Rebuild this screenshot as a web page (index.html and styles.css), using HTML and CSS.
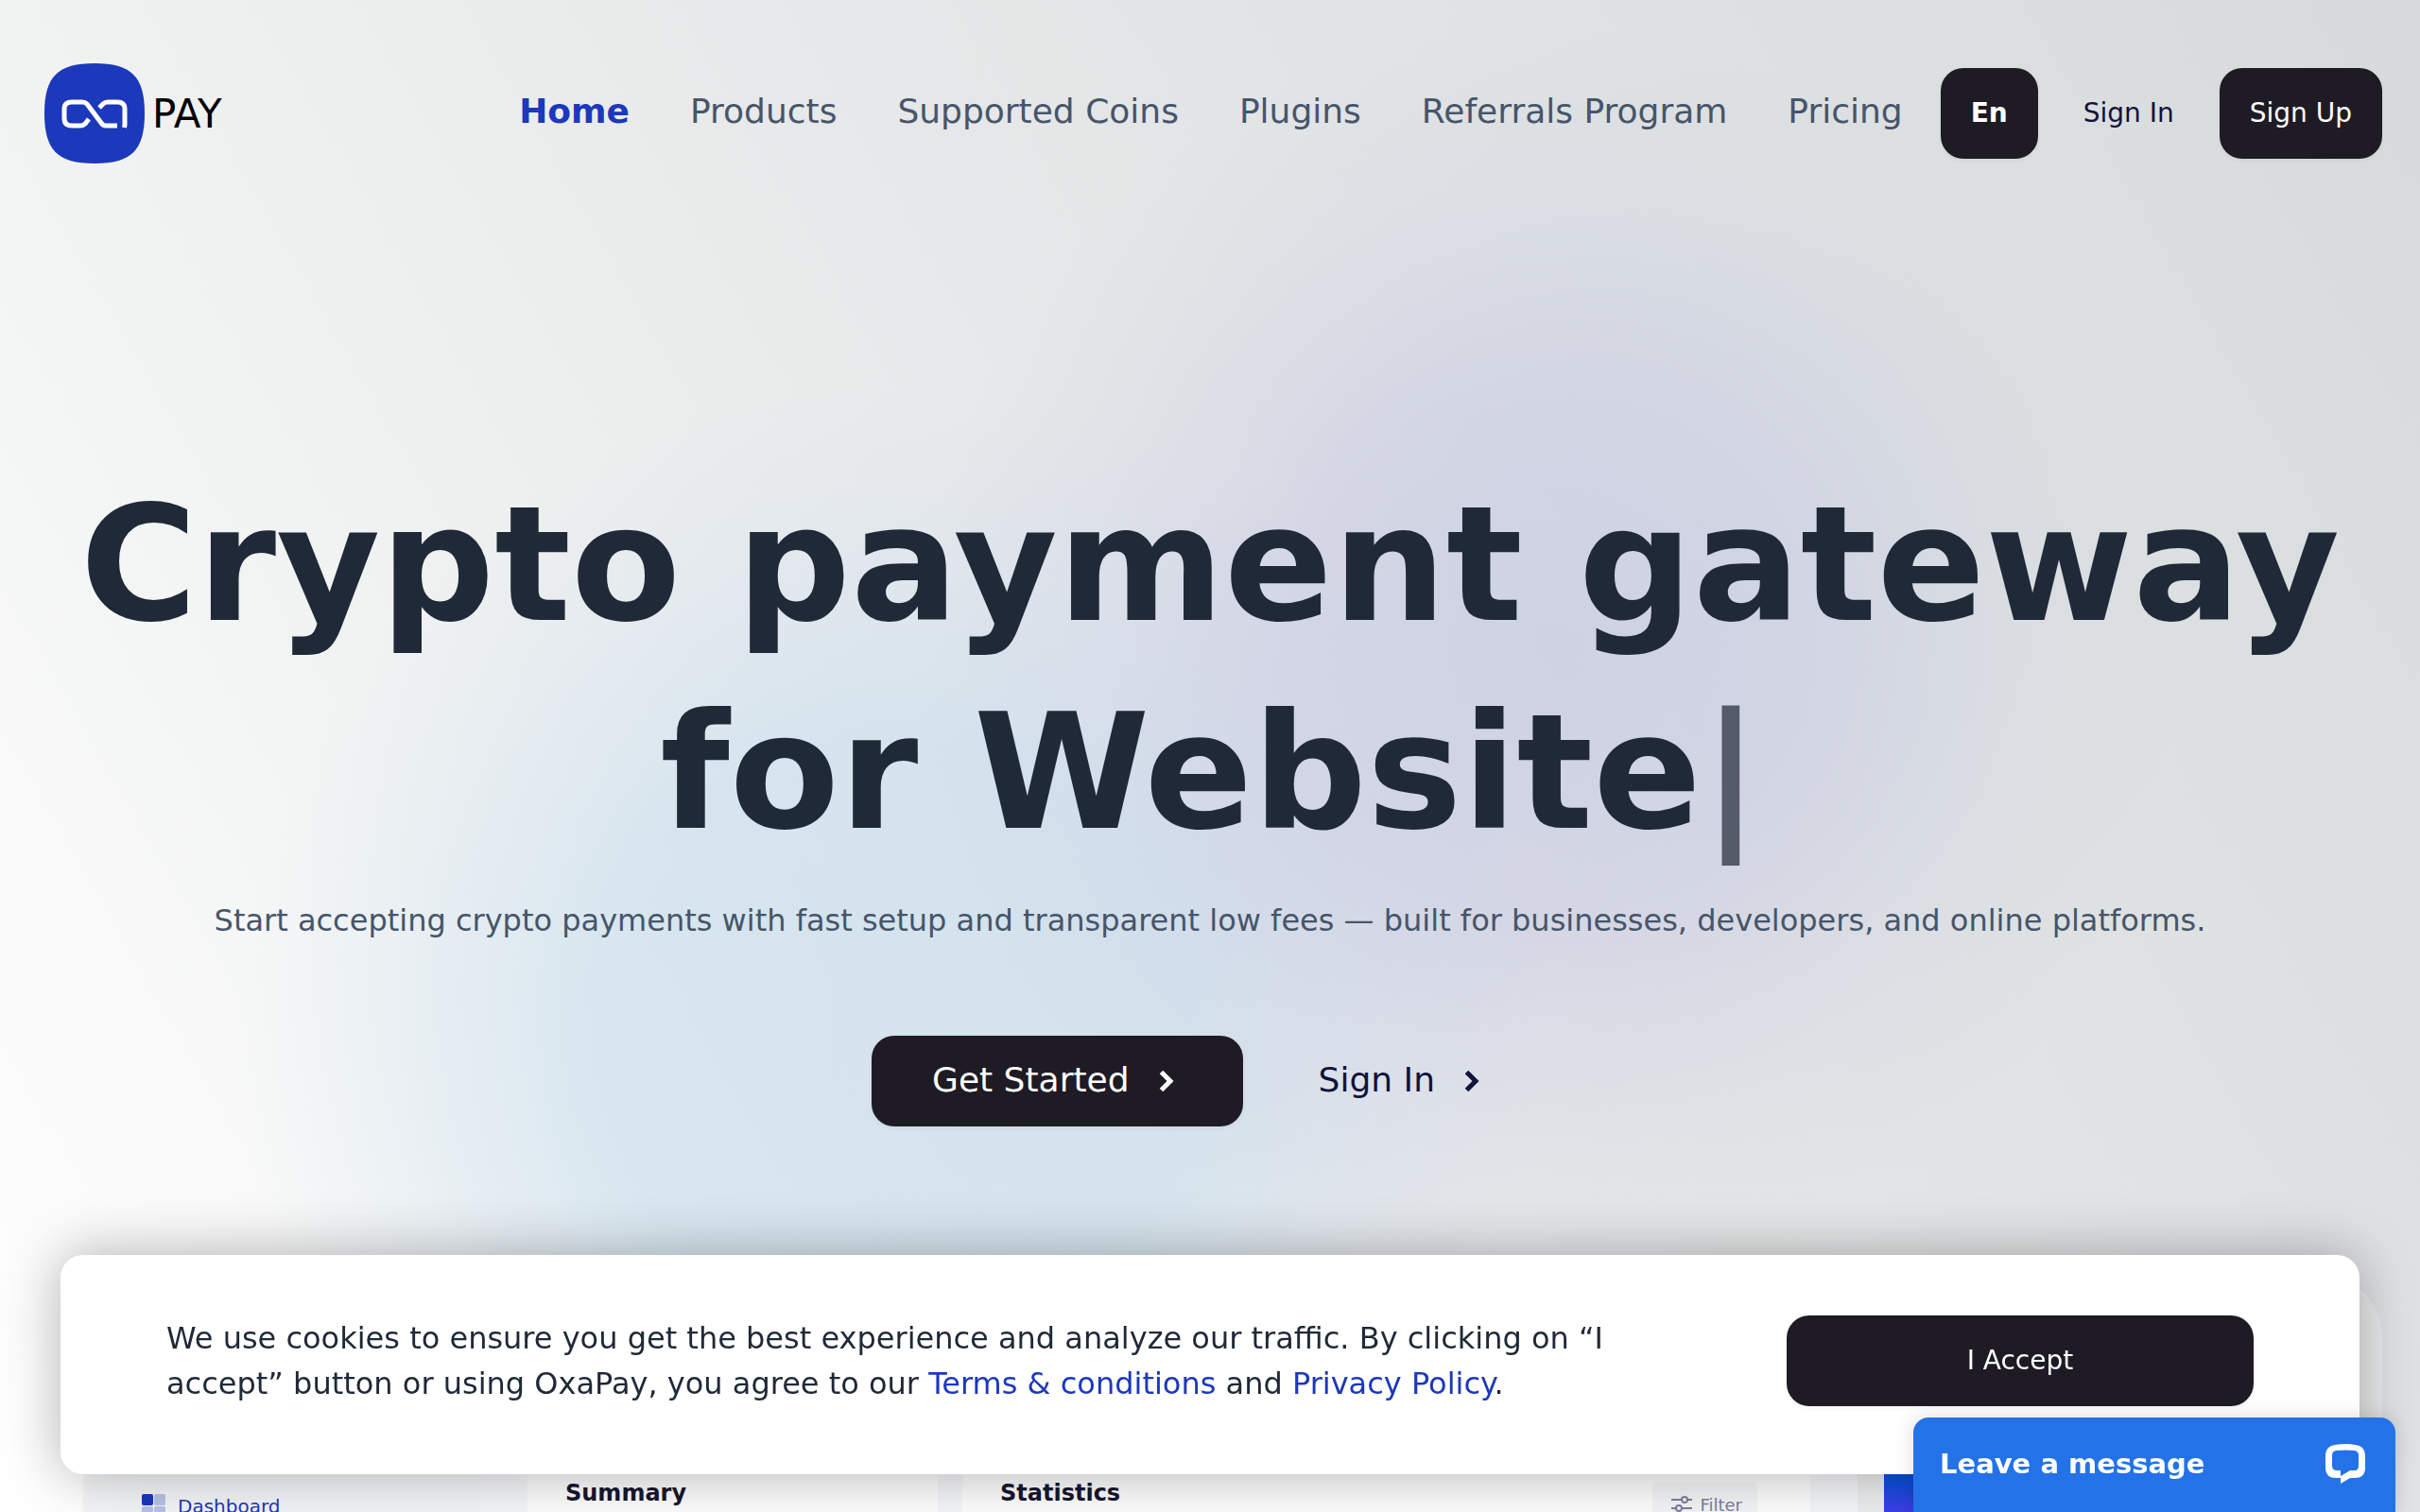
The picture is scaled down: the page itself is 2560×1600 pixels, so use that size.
FILE: index.html
```html
<!DOCTYPE html>
<html lang="en">
<head>
  <meta charset="UTF-8" />
  <meta name="viewport" content="width=device-width, initial-scale=1.0"/>
  <title>OxaPay - Crypto Payment Gateway</title>
  <link rel="stylesheet" href="styles.css">
</head>
<body>

<header class="header">
  <a href="#" class="logo">
    <svg class="logo-mark" viewBox="0 0 106 106" aria-hidden="true">
      <path fill="#1c38bb" d="M53 0C92 0 106 14 106 53S92 106 53 106 0 92 0 53 14 0 53 0z"/>
      <g fill="none" stroke="#fff" stroke-width="5">
        <path d="M47 59l-4 5q-2 2-5 2H29q-8 0-8-8V48q0-7 8-7H40q3 0 5 2L60 63q2 3 5 3H77"/>
        <path d="M58 47l4-4q2-2 5-2H77q8 0 8 7V65l-.5 3"/>
      </g>
    </svg>
    <span class="logo-text">PAY</span>
  </a>

  <nav class="nav">
    <a href="#" class="active">Home</a>
    <a href="#">Products</a>
    <a href="#">Supported Coins</a>
    <a href="#">Plugins</a>
    <a href="#">Referrals Program</a>
    <a href="#">Pricing</a>
  </nav>

  <div class="actions">
    <button type="button" class="btn btn-dark btn-lang">En</button>
    <a href="#" class="btn">Sign In</a>
    <a href="#" class="btn btn-dark">Sign Up</a>
  </div>
</header>

<main>
  <section class="hero">
    <h1>Crypto payment gateway<br>for Website<span class="cursor">|</span></h1>
    <p>Start accepting crypto payments with fast setup and transparent low fees — built for businesses, developers, and online platforms.</p>
    <div class="hero-buttons">
      <a href="#" class="btn btn-large btn-dark">Get Started
        <svg class="chevron" viewBox="0 0 32 32" aria-hidden="true"><path d="M9.5 8.5L19 18l-9.5 9.5"/></svg>
      </a>
      <a href="#" class="btn btn-large">Sign In
        <svg class="chevron" viewBox="0 0 32 32" aria-hidden="true"><path d="M9.5 8.5L19 18l-9.5 9.5"/></svg>
      </a>
    </div>
  </section>

  <section class="preview">
    <aside class="preview-side">
      <a href="#" class="side-link">
        <svg class="side-icon" viewBox="0 0 26 26" aria-hidden="true">
          <rect width="12" height="12" rx="2" fill="#1c38bb"/>
          <rect x="13" width="12" height="12" rx="2" fill="#b9c1e8"/>
          <rect y="13" width="12" height="12" rx="2" fill="#b9c1e8"/>
          <rect x="13" y="13" width="12" height="12" rx="2" fill="#b9c1e8"/>
        </svg>
        Dashboard
      </a>
    </aside>
    <div class="preview-main">
      <div class="card">
        <h2>Summary</h2>
      </div>
      <div class="card">
        <h2>Statistics</h2>
        <button type="button" class="filter">
          <svg class="filter-icon" viewBox="0 0 22 20" aria-hidden="true">
            <path d="M0 5h11M17 5h5M0 14h5M11 14h11"/>
            <circle cx="14" cy="5" r="3"/>
            <circle cx="8" cy="14" r="3"/>
          </svg>
          Filter
        </button>
      </div>
    </div>
    <div class="preview-phone"></div>
  </section>
</main>

<div class="cookie">
  <p>We use cookies to ensure you get the best experience and analyze our traffic. By clicking on “I accept” button or using OxaPay, you agree to our <a href="#">Terms &amp; conditions</a> and <a href="#">Privacy Policy</a>.</p>
  <button type="button" class="btn btn-dark">I Accept</button>
</div>

<button type="button" class="chat">
  Leave a message
  <svg class="chat-icon" viewBox="0 0 42 42" aria-hidden="true">
    <path fill="#fff" fill-rule="evenodd" d="M10 1Q21-1 32 1 41 2 42 11V27Q41 36 31 36H26L16 42V36H11Q1 36 0 27V11Q1 2 10 1zM11 7Q7 8 7 12V23Q7 28 12 28H16V34L26 28H31Q35 28 35 23V12Q35 8 31 7 21 6 11 7z"/>
  </svg>
</button>

</body>
</html>
```

FILE: styles.css
```css
* {
  box-sizing: border-box;
}

body {
  margin: 0;
  min-height: 100vh;
  overflow: hidden;
  font-family: "DejaVu Sans", sans-serif;
  color: #1f2937;
  background:
    radial-gradient(circle 26vw at 64% 43%, rgba(190, 194, 226, 0.55), rgba(192, 194, 226, 0.45) 40%, rgba(196, 198, 228, 0.15) 75%, rgba(196, 198, 228, 0)),
    radial-gradient(circle 27vw at 37% 68%, rgba(196, 220, 238, 0.6), rgba(196, 220, 238, 0.55) 45%, rgba(200, 220, 240, 0.2) 78%, rgba(200, 220, 240, 0)),
    linear-gradient(60deg, #ffffff, #f3f5f4 22%, #e7e8e9 50%, #dfe3e3 72%, #d6dada);
}

a {
  color: inherit;
  text-decoration: none;
}

button {
  font-family: inherit;
  border: none;
  cursor: pointer;
}

.header {
  display: flex;
  align-items: center;
  height: 240px;
  padding: 0 40px 0 47px;
}

.logo {
  display: flex;
  align-items: center;
  gap: 8px;
  color: #000;
}

.logo-mark {
  width: 106px;
  height: 106px;
}

.logo-text {
  font-size: 42px;
}

.nav {
  display: flex;
  gap: 64px;
  margin-left: auto;
  padding-bottom: 5px;
  font-size: 36px;
  color: #475569;
}

.nav .active {
  color: #1c38bb;
  font-weight: bold;
}

.actions {
  display: flex;
  gap: 16px;
  margin-left: 40px;
}

.btn {
  display: flex;
  align-items: center;
  justify-content: center;
  height: 96px;
  padding: 0 32px 2px;
  border-radius: 24px;
  font-size: 28px;
  color: #12123b;
}

.btn-dark {
  background-color: #1e1b24;
  color: #fff;
  box-shadow: 0 2px 4px rgba(0, 0, 0, 0.05);
}

.btn-lang {
  font-weight: bold;
}

.btn-large {
  gap: 24px;
  padding: 0 64px 4px;
  font-size: 36px;
}

.chevron {
  width: 32px;
  height: 32px;
  fill: none;
  stroke: currentColor;
  stroke-width: 5;
}

.hero {
  padding: 248px 40px 158px;
  text-align: center;
}

h1 {
  margin: 0;
  font-size: 169px;
  line-height: 220px;
}

.cursor {
  opacity: 0.7;
}

.hero p {
  margin: 18px 0 94px;
  font-size: 32px;
  line-height: 56px;
  color: #475569;
}

.hero-buttons {
  display: flex;
  justify-content: center;
  gap: 16px;
}

.preview {
  display: flex;
  height: 260px;
  margin: 0 40px;
  padding: 0 48px;
  border-radius: 64px 64px 0 0;
  background-color: rgba(255, 255, 255, 0.3);
}

.preview-side {
  width: 420px;
  padding: 231px 62px 0;
  background-color: #f4f5f6;
}

.side-link {
  display: flex;
  align-items: center;
  gap: 12px;
  font-size: 20px;
  color: #1c38bb;
}

.side-icon {
  width: 26px;
  height: 26px;
}

.preview-main {
  flex: 1;
  display: grid;
  grid-template-columns: 434px 1fr;
  gap: 26px;
  padding: 0 50px;
  background-color: #f5f6f9;
}

.card {
  display: flex;
  align-items: flex-start;
  justify-content: space-between;
  padding: 218px 56px 0 40px;
  background-color: #fdfdfd;
}

.card h2 {
  margin: 0;
  font-size: 24px;
  line-height: 24px;
  color: #17172f;
}

.filter {
  display: flex;
  align-items: center;
  gap: 8px;
  height: 48px;
  padding: 0 16px 0 20px;
  border-radius: 8px;
  background-color: #f4f5f6;
  font-size: 18px;
  color: #7b7f9b;
}

.filter-icon {
  width: 22px;
  height: 20px;
  fill: none;
  stroke: currentColor;
  stroke-width: 2;
}

.preview-phone {
  width: 479px;
  margin-left: 28px;
  background: linear-gradient(#0652dd 82%, #3f3de8 96%);
}

.cookie {
  position: fixed;
  left: 64px;
  right: 64px;
  bottom: 40px;
  display: grid;
  grid-template-columns: 13fr 4fr;
  gap: 108px;
  align-items: start;
  padding: 64px 112px 72px;
  border-radius: 24px;
  background-color: #fff;
  box-shadow: 0 0 60px rgba(0, 0, 0, 0.3);
}

.cookie p {
  margin: 0;
  font-size: 32px;
  line-height: 48px;
}

.cookie p a {
  color: #1c38bb;
}

.chat {
  position: fixed;
  right: 26px;
  bottom: 0;
  display: flex;
  align-items: center;
  justify-content: space-between;
  width: 510px;
  height: 100px;
  padding: 0 32px 2px 28px;
  border-radius: 16px 16px 0 0;
  background-color: #2472e8;
  color: #fff;
  font-size: 29px;
  font-weight: bold;
  box-shadow: 0 0 20px rgba(0, 0, 0, 0.15);
}

.chat-icon {
  width: 42px;
  height: 42px;
}
```
